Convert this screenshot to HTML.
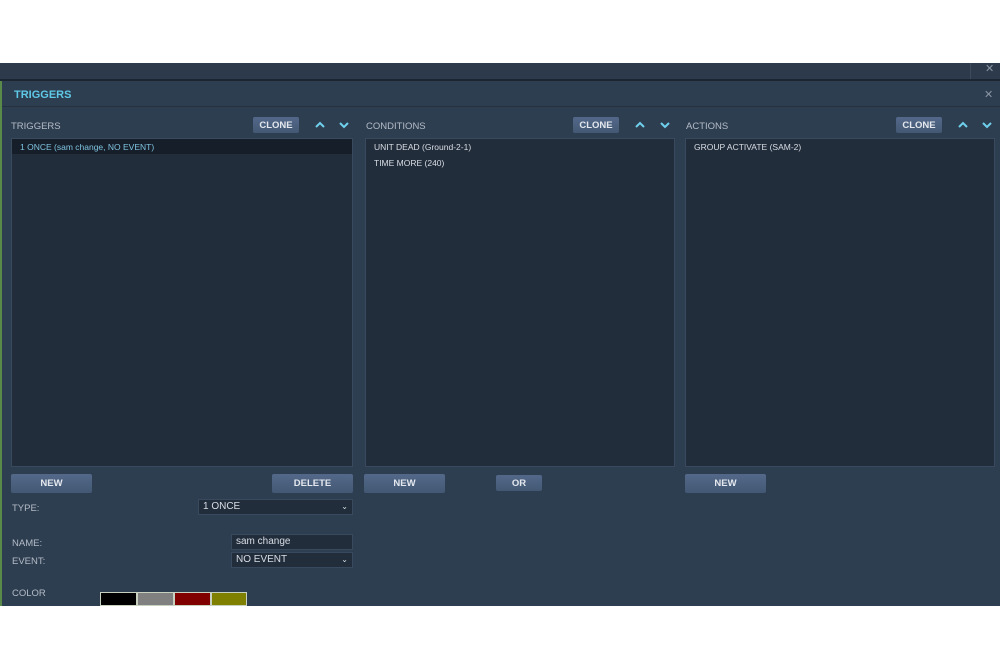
<!DOCTYPE html>
<html><head><style>
*{margin:0;padding:0;box-sizing:border-box}
body{width:1000px;height:669px;background:#fff;position:relative;overflow:hidden;font-family:"Liberation Sans","DejaVu Sans",sans-serif;}
.a{position:absolute}
.top{left:0;top:63px;width:1000px;height:18px;background:#2c3a4b;border-bottom:2px solid #1c2632}
.panel{left:0;top:81px;width:1000px;height:525px;background:#2e3e51}
.title{left:14px;top:89px;color:#5fc8e6;font-size:11px;font-weight:bold}
.hdrline{left:2px;top:106px;width:998px;height:1px;background:#26323f}
.lbl{color:#b4bcc6;font-size:9.5px}
.list{background:#222d3c;border:1px solid #3a4a5e}
.btn{background:linear-gradient(#54698a,#435873);color:#e4e8ee;font-size:9.5px;font-weight:bold;border-radius:2px;display:flex;align-items:center;justify-content:center}
.clone{height:16px;width:46px}
.item{color:#d8dde4;font-size:8.5px}
.dd{background:#222d3c;border:1px solid #3a4a5e;color:#d8dde4;font-size:10px;padding-left:4px;line-height:14px}
.x{color:#8a96a4;font-size:11px}
svg.ch{position:absolute;width:12px;height:8px}
</style></head><body>
<div class="a top"></div>
<div class="a" style="left:970px;top:63px;width:1px;height:16px;background:#3b4a5c"></div>
<div class="a x" style="left:985px;top:62px">✕</div>
<div class="a panel"></div>
<div class="a" style="left:0;top:81px;width:2px;height:525px;background:#5a8a4a"></div>
<div class="a title">TRIGGERS</div>
<div class="a x" style="left:984px;top:88px">✕</div>
<div class="a hdrline"></div>

<div class="a lbl" style="left:11px;top:121px">TRIGGERS</div>
<div class="a btn clone" style="left:253px;top:117px">CLONE</div>
<svg class="ch" style="left:314px;top:121px" viewBox="0 0 12 8"><path d="M2 6 L6 2 L10 6" fill="none" stroke="#6fd0ec" stroke-width="2"/></svg>
<svg class="ch" style="left:338px;top:121px" viewBox="0 0 12 8"><path d="M2 2 L6 6 L10 2" fill="none" stroke="#6fd0ec" stroke-width="2"/></svg>
<div class="a list" style="left:11px;top:138px;width:342px;height:329px"></div>
<div class="a" style="left:12px;top:139px;width:340px;height:15px;background:#161e29"></div>
<div class="a item" style="left:20px;top:142px;color:#7fc4e0">1 ONCE (sam change, NO EVENT)</div>

<div class="a lbl" style="left:366px;top:121px">CONDITIONS</div>
<div class="a btn clone" style="left:573px;top:117px">CLONE</div>
<svg class="ch" style="left:634px;top:121px" viewBox="0 0 12 8"><path d="M2 6 L6 2 L10 6" fill="none" stroke="#6fd0ec" stroke-width="2"/></svg>
<svg class="ch" style="left:659px;top:121px" viewBox="0 0 12 8"><path d="M2 2 L6 6 L10 2" fill="none" stroke="#6fd0ec" stroke-width="2"/></svg>
<div class="a list" style="left:365px;top:138px;width:310px;height:329px"></div>
<div class="a item" style="left:374px;top:142px">UNIT DEAD (Ground-2-1)</div>
<div class="a item" style="left:374px;top:158px">TIME MORE (240)</div>

<div class="a lbl" style="left:686px;top:121px">ACTIONS</div>
<div class="a btn clone" style="left:896px;top:117px">CLONE</div>
<svg class="ch" style="left:957px;top:121px" viewBox="0 0 12 8"><path d="M2 6 L6 2 L10 6" fill="none" stroke="#6fd0ec" stroke-width="2"/></svg>
<svg class="ch" style="left:981px;top:121px" viewBox="0 0 12 8"><path d="M2 2 L6 6 L10 2" fill="none" stroke="#6fd0ec" stroke-width="2"/></svg>
<div class="a list" style="left:685px;top:138px;width:310px;height:329px"></div>
<div class="a item" style="left:694px;top:142px">GROUP ACTIVATE (SAM-2)</div>

<div class="a btn" style="left:11px;top:474px;width:81px;height:19px">NEW</div>
<div class="a btn" style="left:272px;top:474px;width:81px;height:19px">DELETE</div>
<div class="a btn" style="left:364px;top:474px;width:81px;height:19px">NEW</div>
<div class="a btn" style="left:496px;top:475px;width:46px;height:16px">OR</div>
<div class="a btn" style="left:685px;top:474px;width:81px;height:19px">NEW</div>

<div class="a lbl" style="left:12px;top:503px">TYPE:</div>
<div class="a dd" style="left:198px;top:499px;width:155px;height:16px">1 ONCE<span style="position:absolute;right:4px;font-size:8px">⌄</span></div>
<div class="a lbl" style="left:12px;top:538px">NAME:</div>
<div class="a dd" style="left:231px;top:534px;width:122px;height:16px">sam change</div>
<div class="a lbl" style="left:12px;top:556px">EVENT:</div>
<div class="a dd" style="left:231px;top:552px;width:122px;height:16px">NO EVENT<span style="position:absolute;right:4px;font-size:8px">⌄</span></div>
<div class="a lbl" style="left:12px;top:588px">COLOR</div>
<div class="a" style="left:100px;top:592px;width:37px;height:14px;background:#000;border:1px solid #c8d0c0"></div>
<div class="a" style="left:137px;top:592px;width:37px;height:14px;background:#808080;border:1px solid #c8d0c0"></div>
<div class="a" style="left:174px;top:592px;width:37px;height:14px;background:#800000;border:1px solid #c8d0c0"></div>
<div class="a" style="left:211px;top:592px;width:36px;height:14px;background:#808000;border:1px solid #c8d0c0"></div>
</body></html>
